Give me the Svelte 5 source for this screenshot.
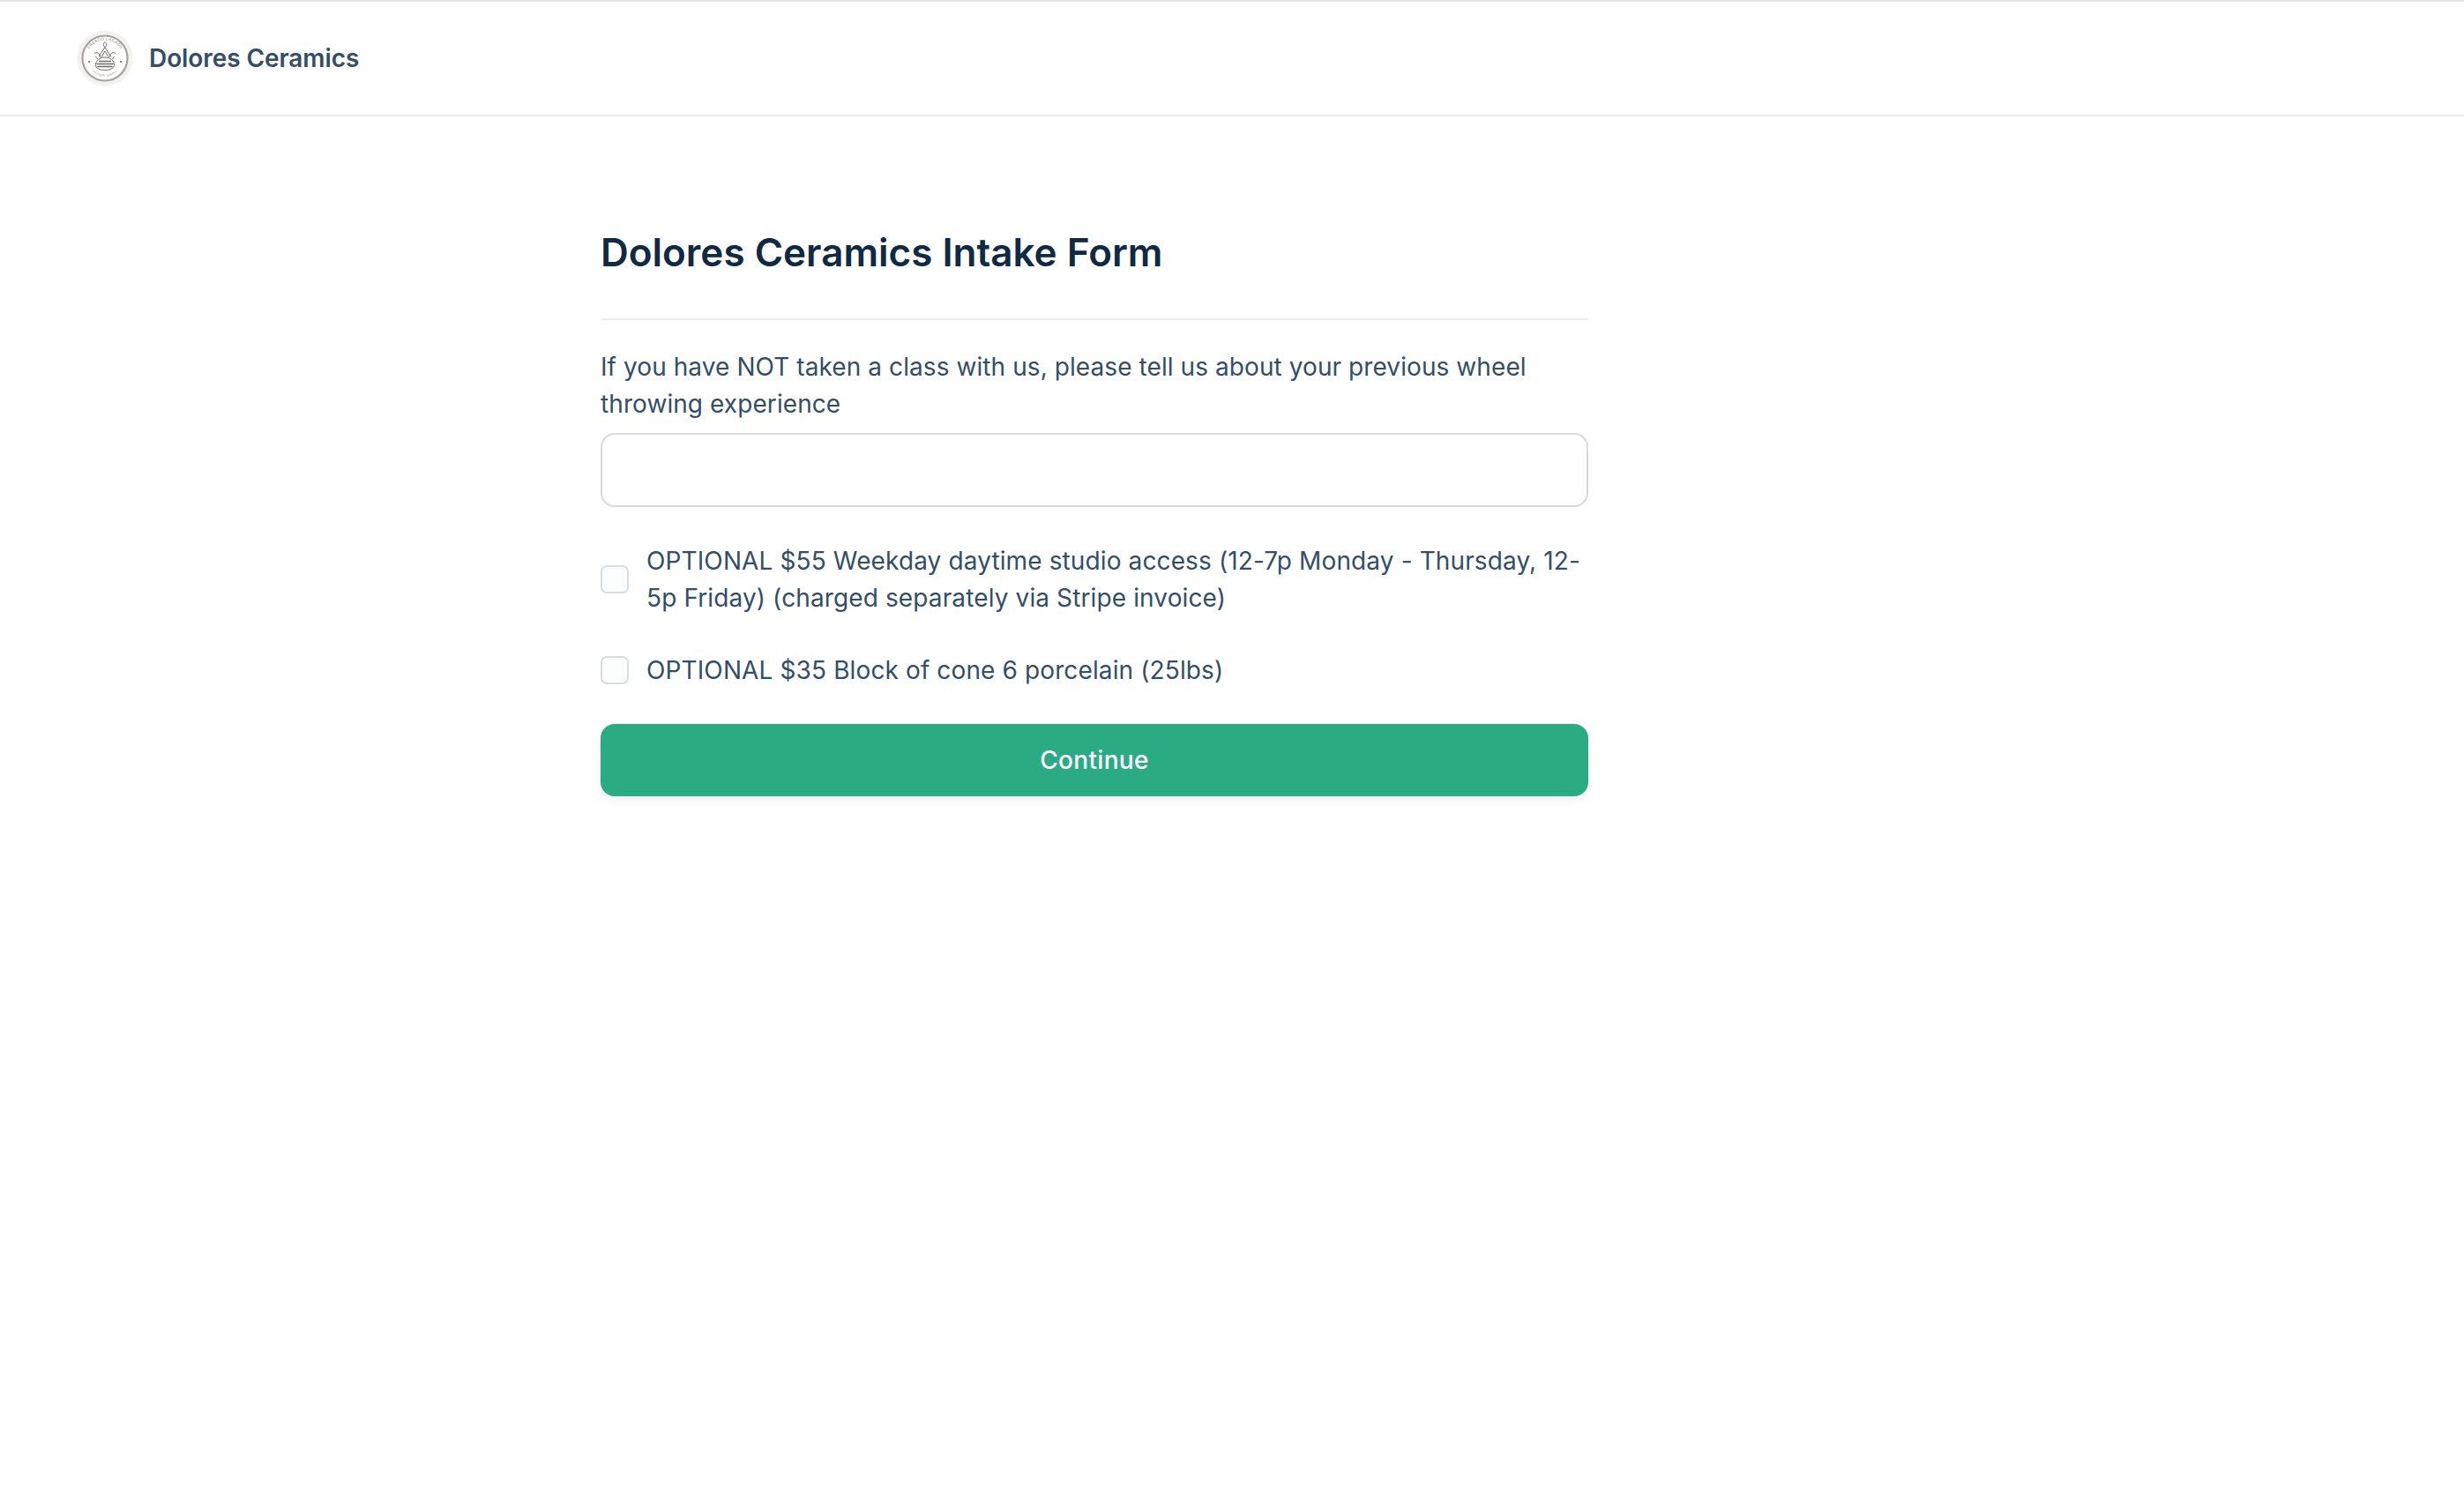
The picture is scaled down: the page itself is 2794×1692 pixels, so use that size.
<script>
  let experience = $state('')
  let options = $state([
    { id: 1, text: 'OPTIONAL $55 Weekday daytime studio access (12-7p Monday - Thursday, 12-5p Friday) (charged separately via Stripe invoice)', checked: false },
    { id: 2, text: 'OPTIONAL $35 Block of cone 6 porcelain (25lbs)', checked: false },
  ])
</script>

<div class="page">
  <header class="topbar">
    <svg class="logo" viewBox="0 0 64 64" aria-hidden="true">
      <circle cx="32" cy="32" r="31.500" fill="#f3f2ef" />
      <circle cx="32" cy="32" r="25.500" fill="#fff" stroke="#a5a39e" stroke-width="2.200" />
      <defs>
        <path id="arc-top" d="M11.500 32a20.500 20.500 0 0 1 41 0" />
        <path id="arc-bottom" d="M13 40a20.500 20.500 0 0 0 38 0" />
      </defs>
      <text class="seal" font-size="4.400"><textPath href="#arc-top" startOffset="50%" text-anchor="middle">FRESCO CACAOS</textPath></text>
      <text class="seal" font-size="3"><textPath href="#arc-bottom" startOffset="50%" text-anchor="middle">POTTERY SUPPLY</textPath></text>
      <circle cx="14" cy="36" r="1" fill="#5f5d5a" />
      <circle cx="50" cy="36" r="1" fill="#5f5d5a" />
      <g fill="none" stroke="#6f6c68" stroke-width="1">
        <path d="M32 13.500c-2.200 2-2.200 4 0 6c2.200-2 2.200-4 0-6z" />
        <path d="M32 19.500l-7 11M32 19.500l7 11M32 24l-3.500 6M32 24l3.500 6" />
        <path d="M20 26.500c2-1.500 4-1 5 .5l3 4.500M44 26.500c-2-1.500-4-1-5 .5l-3 4.500" />
        <path d="M21.500 30l2.500 3.500M42.500 30l-2.500 3.500" />
        <path d="M32 31c-6 0-10.500 4-10.500 8.500c0 3.800 4.500 6 10.500 6s10.500-2.200 10.500-6c0-4.500-4.500-8.500-10.500-8.500z" fill="#fff" />
        <path d="M25 35.500h14M22.500 38.500h19M23.500 41.500h17" stroke-width="1.300" />
      </g>
    </svg>
    <span class="brand">Dolores Ceramics</span>
  </header>

  <main class="form-wrap">
    <h1>Dolores Ceramics Intake Form</h1>
    <hr />

    <form class="form" onsubmit={e => e.preventDefault()}>
      <label class="field">
        <span class="field-label">If you have NOT taken a class with us, please tell us about your previous wheel throwing experience</span>
        <input type="text" bind:value={experience} />
      </label>

      {#each options as opt (opt.id)}
        <label class="check-row">
          <input type="checkbox" bind:checked={opt.checked} />
          <span>{opt.text}</span>
        </label>
      {/each}

      <button type="submit">Continue</button>
    </form>
  </main>
</div>

<style>
  :global(body) { background: #fff; }

  .page {
    font-family: Inter, "Liberation Sans", sans-serif;
    color: #334e68;
    min-height: 1692px;
  }

  .topbar {
    display: flex;
    align-items: center;
    gap: 18px;
    height: 128px;
    padding-left: 87px;
    border-top: 2px solid #e4e5e6;
    border-bottom: 2px solid #eaebec;
  }
  .logo { width: 64px; height: 64px; flex-shrink: 0; }
  .seal { font-family: "Liberation Sans", sans-serif; fill: #7d7a75; letter-spacing: 0.3px; }
  .brand { font-size: 28px; font-weight: 600; color: #334e68; letter-spacing: -0.08px; }

  .form-wrap {
    width: 1120px;
    margin-left: 681px;
    padding-top: 126px;
  }

  h1 {
    margin: 0;
    font-size: 44px;
    line-height: 56px;
    font-weight: 600;
    color: #102a43;
  }

  hr {
    margin: 47px 0 32px;
    border: 0;
    border-top: 2px solid #eceded;
  }

  .form { display: flex; flex-direction: column; }

  .field { display: flex; flex-direction: column; gap: 12px; }

  .field-label, .check-row span {
    font-size: 28px;
    line-height: 42px;
    color: #334e68;
    letter-spacing: 0.08px;
  }
  .check-row span { letter-spacing: 0.12px; }

  input[type="text"] {
    height: 84px;
    box-sizing: border-box;
    border: 2px solid #d6d8da;
    border-radius: 16px;
    background: #fff;
    padding: 0 24px;
    font: inherit;
    font-size: 28px;
    outline: none;
  }

  .check-row {
    display: flex;
    align-items: center;
    gap: 20px;
    margin-top: 40px;
  }
  .check-row input {
    appearance: none;
    width: 32px;
    height: 32px;
    margin: 0;
    flex-shrink: 0;
    box-sizing: border-box;
    border: 2px solid #d9dde3;
    border-radius: 7px;
    background: #fcfdfd;
  }

  button {
    margin-top: 40px;
    height: 82px;
    border: 0;
    border-radius: 16px;
    background: #2bab84;
    color: #fff;
    font: inherit;
    font-size: 28px;
    font-weight: 500;
    letter-spacing: 0.3px;
    box-shadow: 0 4px 12px rgba(0, 0, 0, 0.06);
    cursor: pointer;
  }
</style>
